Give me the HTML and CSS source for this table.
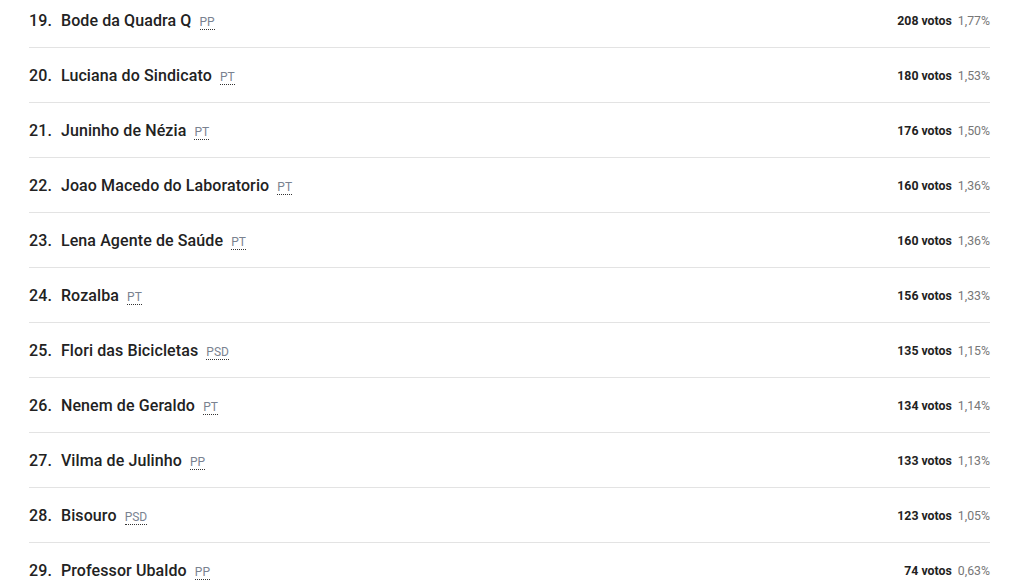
FILE: index.html
```html
<!DOCTYPE html>
<html lang="pt">
<head>
<meta charset="utf-8">
<link rel="stylesheet" href="styles.css">
</head>
<body>
<ul class="list">
  <li class="row"><span class="name"><span class="pos">19.</span>Bode da Quadra Q <abbr class="party">PP</abbr></span><span class="stats"><b class="votes">208 votos</b><span class="pct">1,77%</span></span></li>
  <li class="row"><span class="name"><span class="pos">20.</span>Luciana do Sindicato <abbr class="party">PT</abbr></span><span class="stats"><b class="votes">180 votos</b><span class="pct">1,53%</span></span></li>
  <li class="row"><span class="name"><span class="pos">21.</span>Juninho de Nézia <abbr class="party">PT</abbr></span><span class="stats"><b class="votes">176 votos</b><span class="pct">1,50%</span></span></li>
  <li class="row"><span class="name"><span class="pos">22.</span>Joao Macedo do Laboratorio <abbr class="party">PT</abbr></span><span class="stats"><b class="votes">160 votos</b><span class="pct">1,36%</span></span></li>
  <li class="row"><span class="name"><span class="pos">23.</span>Lena Agente de Saúde <abbr class="party">PT</abbr></span><span class="stats"><b class="votes">160 votos</b><span class="pct">1,36%</span></span></li>
  <li class="row"><span class="name"><span class="pos">24.</span>Rozalba <abbr class="party">PT</abbr></span><span class="stats"><b class="votes">156 votos</b><span class="pct">1,33%</span></span></li>
  <li class="row"><span class="name"><span class="pos">25.</span>Flori das Bicicletas <abbr class="party">PSD</abbr></span><span class="stats"><b class="votes">135 votos</b><span class="pct">1,15%</span></span></li>
  <li class="row"><span class="name"><span class="pos">26.</span>Nenem de Geraldo <abbr class="party">PT</abbr></span><span class="stats"><b class="votes">134 votos</b><span class="pct">1,14%</span></span></li>
  <li class="row"><span class="name"><span class="pos">27.</span>Vilma de Julinho <abbr class="party">PP</abbr></span><span class="stats"><b class="votes">133 votos</b><span class="pct">1,13%</span></span></li>
  <li class="row"><span class="name"><span class="pos">28.</span>Bisouro <abbr class="party">PSD</abbr></span><span class="stats"><b class="votes">123 votos</b><span class="pct">1,05%</span></span></li>
  <li class="row"><span class="name"><span class="pos">29.</span>Professor Ubaldo <abbr class="party">PP</abbr></span><span class="stats"><b class="votes">74 votos</b><span class="pct">0,63%</span></span></li>
</ul>
</body>
</html>
```

FILE: styles.css
```css
html, body {
  margin: 0;
  padding: 0;
  background: #fff;
  overflow: hidden;
}
body {
  font-family: Roboto, "Noto Sans", sans-serif;
  color: #222;
}
.list {
  list-style: none;
  margin: -7px 0 0 29px;
  padding: 0;
  width: 961px;
}
.row {
  display: flex;
  align-items: center;
  justify-content: space-between;
  height: 55px;
  box-sizing: border-box;
  border-bottom: 1px solid #e3e3e3;
}
.name {
  font-size: 16px;
  font-weight: 500;
  letter-spacing: 0.1px;
  color: #222;
}
.pos {
  margin-right: 9px;
}
.party {
  margin-left: 4px;
  font-size: 12px;
  font-weight: 400;
  letter-spacing: 0;
  color: #7a8290;
  text-decoration: none;
  border-bottom: 1px dotted #333;
}
.stats {
  font-size: 12.3px;
  display: flex;
  gap: 6px;
  align-items: baseline;
  padding-top: 2px;
}
.votes {
  font-weight: 700;
  color: #222;
}
.pct {
  color: #777;
}
```
